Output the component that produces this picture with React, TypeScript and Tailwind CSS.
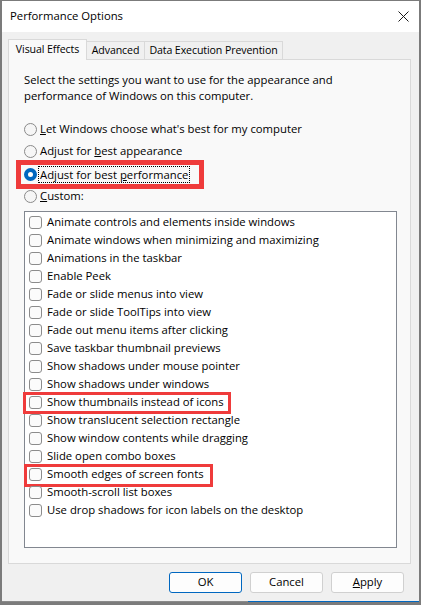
import React from 'react';

const effects = [
  'Animate controls and elements inside windows',
  'Animate windows when minimizing and maximizing',
  'Animations in the taskbar',
  'Enable Peek',
  'Fade or slide menus into view',
  'Fade or slide ToolTips into view',
  'Fade out menu items after clicking',
  'Save taskbar thumbnail previews',
  'Show shadows under mouse pointer',
  'Show shadows under windows',
  'Show thumbnails instead of icons',
  'Show translucent selection rectangle',
  'Show window contents while dragging',
  'Slide open combo boxes',
  'Smooth edges of screen fonts',
  'Smooth-scroll list boxes',
  'Use drop shadows for icon labels on the desktop',
];

const highlighted = ['Show thumbnails instead of icons', 'Smooth edges of screen fonts'];

const Radio = ({ checked, children }: { checked?: boolean; children: React.ReactNode }) => (
  <div className="relative h-[22.5px] flex items-center gap-[3px]">
    {checked ? (
      <span className="w-[13px] h-[13px] rounded-full border-[4px] border-[#0067c0] bg-white shrink-0" />
    ) : (
      <span className="w-[13px] h-[13px] rounded-full border border-[#8a8a8a] bg-[#f6f6f6] shrink-0" />
    )}
    {children}
  </div>
);

export default function App() {
  return (
    <div className="w-[421px] h-[605px] flex flex-col bg-[#f0f0f0] border-x-2 border-t border-[#7b7b7b] text-black font-['Open_Sans',sans-serif] text-[11.3px] overflow-hidden">
      {/* Title bar */}
      <div className="h-[31px] bg-white flex items-center justify-between pl-[8px] pr-[10px] shrink-0">
        <span>Performance Options</span>
        <svg width="11" height="11" viewBox="0 0 11 11" className="text-[#1a1a1a]">
          <path d="M0.5 0.5 L10.5 10.5 M10.5 0.5 L0.5 10.5" stroke="currentColor" strokeWidth="1" />
        </svg>
      </div>

      {/* Body */}
      <div className="flex-1 flex flex-col pl-[6px] pr-[8px] pt-[7px]">
        {/* Tabs */}
        <div className="flex items-end relative z-10 text-[10.6px] tracking-[-0.1px] whitespace-nowrap">
          <div className="w-[79px] h-[21px] -mb-px flex items-center justify-center bg-[#f9f9f9] border-x border-t border-[#d9d9d9]">
            Visual Effects
          </div>
          <div className="w-[58px] h-[18px] flex items-center justify-center border-t border-r border-[#d9d9d9]">
            Advanced
          </div>
          <div className="w-[138px] h-[18px] flex items-center justify-center border-t border-r border-[#d9d9d9]">
            Data Execution Prevention
          </div>
        </div>

        {/* Panel */}
        <div className="h-[505px] bg-[#f9f9f9] border border-[#d9d9d9] pl-[15px] pt-[12px]">
          <p className="leading-[16px]">
            Select the settings you want to use for the appearance and
            <br />
            performance of Windows on this computer.
          </p>

          <div className="mt-[14px] flex flex-col">
            <Radio>
              <span>
                <u>L</u>et Windows choose what's best for my computer
              </span>
            </Radio>
            <Radio>
              <span>
                Adjust for <u>b</u>est appearance
              </span>
            </Radio>
            <Radio checked>
              <span className="outline-1 outline-dotted outline-black px-px -ml-px leading-[15px]">
                Adjust for best <u>p</u>erformance
              </span>
              <span className="absolute left-[-8px] top-[-3px] w-[188px] h-[29px] border-[5px] border-[#ef3b3b]" />
            </Radio>
            <Radio>
              <span>
                <u>C</u>ustom:
              </span>
            </Radio>
          </div>

          <div className="mt-[3px] w-[373px] h-[337px] bg-white border border-[#828790] pt-px">
            {effects.map((label) => (
              <div key={label} className="relative h-[18px] flex items-center pl-[4px] gap-[5px]">
                <span className="w-[13px] h-[13px] rounded-[3px] border border-[#8c8c8c] bg-[#fbfbfb] shrink-0" />
                <span className="whitespace-nowrap">{label}</span>
                {highlighted.includes(label) && (
                  <span
                    className={
                      label === highlighted[0]
                        ? 'absolute left-[-2px] top-[-1px] w-[208px] h-[22px] border-[3px] border-[#ef3b3b]'
                        : 'absolute left-[-1px] top-[-1px] w-[189px] h-[23px] border-[3px] border-[#ef3b3b]'
                    }
                  />
                )}
              </div>
            ))}
          </div>
        </div>

        {/* Buttons */}
        <div className="mt-[8px] flex justify-end gap-[8px] pr-[7px]">
          <button className="w-[73px] h-[21px] rounded-[3px] border border-[#0067c0] bg-[#fdfdfd]">OK</button>
          <button className="w-[73px] h-[21px] rounded-[3px] border border-[#d0d0d0] bg-[#fdfdfd]">Cancel</button>
          <button className="w-[73px] h-[21px] rounded-[3px] border border-[#d0d0d0] bg-[#fdfdfd]">
            <u>A</u>pply
          </button>
        </div>
      </div>

      {/* Bottom edge */}
      <div className="h-px flex shrink-0">
        <div className="w-[246px] bg-[#8a8a8a]" />
        <div className="flex-1 bg-[#0067c0]" />
      </div>
      <div className="h-[3px] bg-[#7b7b7b] shrink-0" />
    </div>
  );
}
